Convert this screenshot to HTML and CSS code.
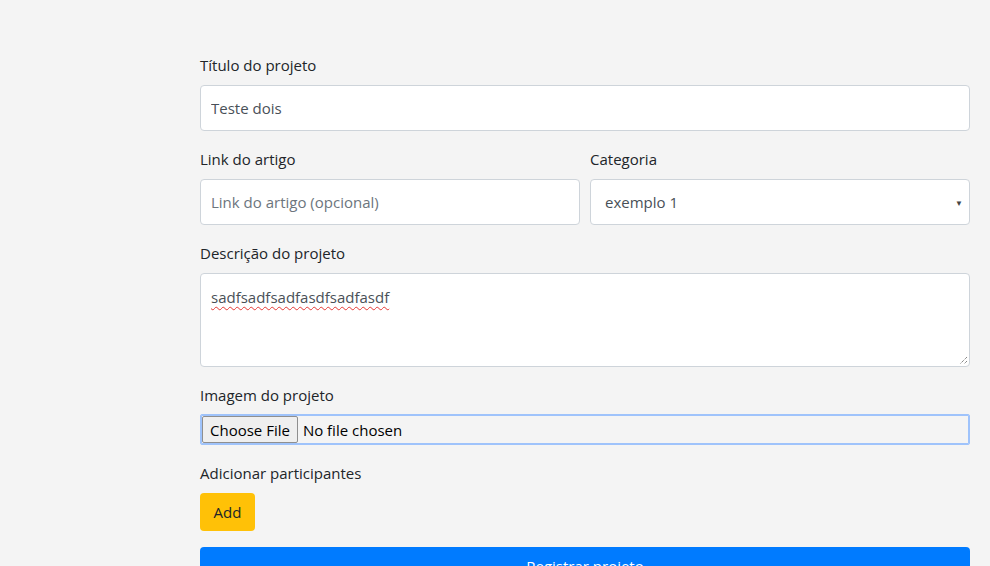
FILE: index.html
```html
<!DOCTYPE html>
<html lang="pt">
<head>
<meta charset="utf-8">
<link rel="stylesheet" href="styles.css">
</head>
<body>
<main class="page">
  <form class="form">
    <div class="group">
      <label class="label">Título do projeto</label>
      <input class="control" type="text" value="Teste dois">
    </div>
    <div class="row">
      <div class="group col">
        <label class="label">Link do artigo</label>
        <input class="control" type="text" placeholder="Link do artigo (opcional)">
      </div>
      <div class="group col">
        <label class="label">Categoria</label>
        <div class="select">
          <span>exemplo 1</span>
          <span class="arrow">▼</span>
        </div>
      </div>
    </div>
    <div class="group">
      <label class="label">Descrição do projeto</label>
      <div class="textarea"><span class="spell">sadfsadfsadfasdfsadfasdf</span>
        <svg class="grip" width="9" height="9" viewBox="0 0 9 9"><path d="M8 1 L1 8 M8 5 L5 8" stroke="#555" stroke-width="1" stroke-dasharray="1 1" fill="none"/></svg>
      </div>
    </div>
    <div class="group">
      <label class="label">Imagem do projeto</label>
      <div class="file"><span class="file-btn">Choose File</span><span class="file-name">No file chosen</span></div>
    </div>
    <div class="group">
      <label class="label">Adicionar participantes</label>
      <div><span class="btn btn-add">Add</span></div>
    </div>
    <div class="btn btn-submit">Registrar projeto</div>
  </form>
</main>
</body>
</html>
```
FILE: styles.css
```css
html, body { margin: 0; padding: 0; }
body {
  background: #f4f4f4;
  font-family: "Open Sans", "Noto Sans", sans-serif;
  font-size: 15px;
  color: #212529;
  overflow: hidden;
  height: 566px;
}
.page { padding: 53px 20px 0 200px; }
.form { width: 770px; }
.group { margin-bottom: 16px; }
.label { display: block; line-height: 24px; margin-bottom: 8px; }
.row { display: flex; gap: 10px; }
.col { flex: 1; min-width: 0; }
.control {
  display: block; box-sizing: border-box; width: 100%; height: 46px;
  border: 1px solid #ced4da; border-radius: 4px; background: #fff;
  padding: 0 10px; font: inherit; color: #495057; outline: none;
}
.control::placeholder { color: #6c757d; }
.select {
  box-sizing: border-box; height: 46px; border: 1px solid #ced4da; border-radius: 4px;
  background: #fff; display: flex; align-items: center; justify-content: space-between;
  padding: 0 6px 0 14px; color: #495057;
}
.arrow { font-size: 8px; color: #444; }
.textarea {
  position: relative; box-sizing: border-box; height: 94px; border: 1px solid #ced4da;
  border-radius: 4px; background: #fff; padding: 13px 10px; color: #495057;
}
.spell { text-decoration: underline wavy #e53935; text-decoration-thickness: 1px; text-underline-offset: 3px; }
.grip { position: absolute; right: 1px; bottom: 1px; }
.file {
  box-sizing: border-box; height: 31px; border: 1px solid #9fc3fb; box-shadow: 0 0 0 1px #9fc3fb inset;
  display: flex; align-items: stretch; border-radius: 2px; margin-top: -1px;
}
.file-btn {
  display: flex; align-items: center; padding: 0 7px; background: #efefef;
  border: 1px solid #8f8f8f; border-radius: 2px; color: #000; margin: 1px 0 1px 1px;
}
.file-name { display: flex; align-items: center; padding-left: 5px; color: #000; }
.btn {
  display: inline-flex; align-items: center; justify-content: center; box-sizing: border-box;
  border-radius: 4px; height: 38px;
}
.btn-add { background: #ffc107; color: #212529; width: 55px; }
.btn-submit { display: flex; background: #007bff; color: #fff; width: 100%; }
```
